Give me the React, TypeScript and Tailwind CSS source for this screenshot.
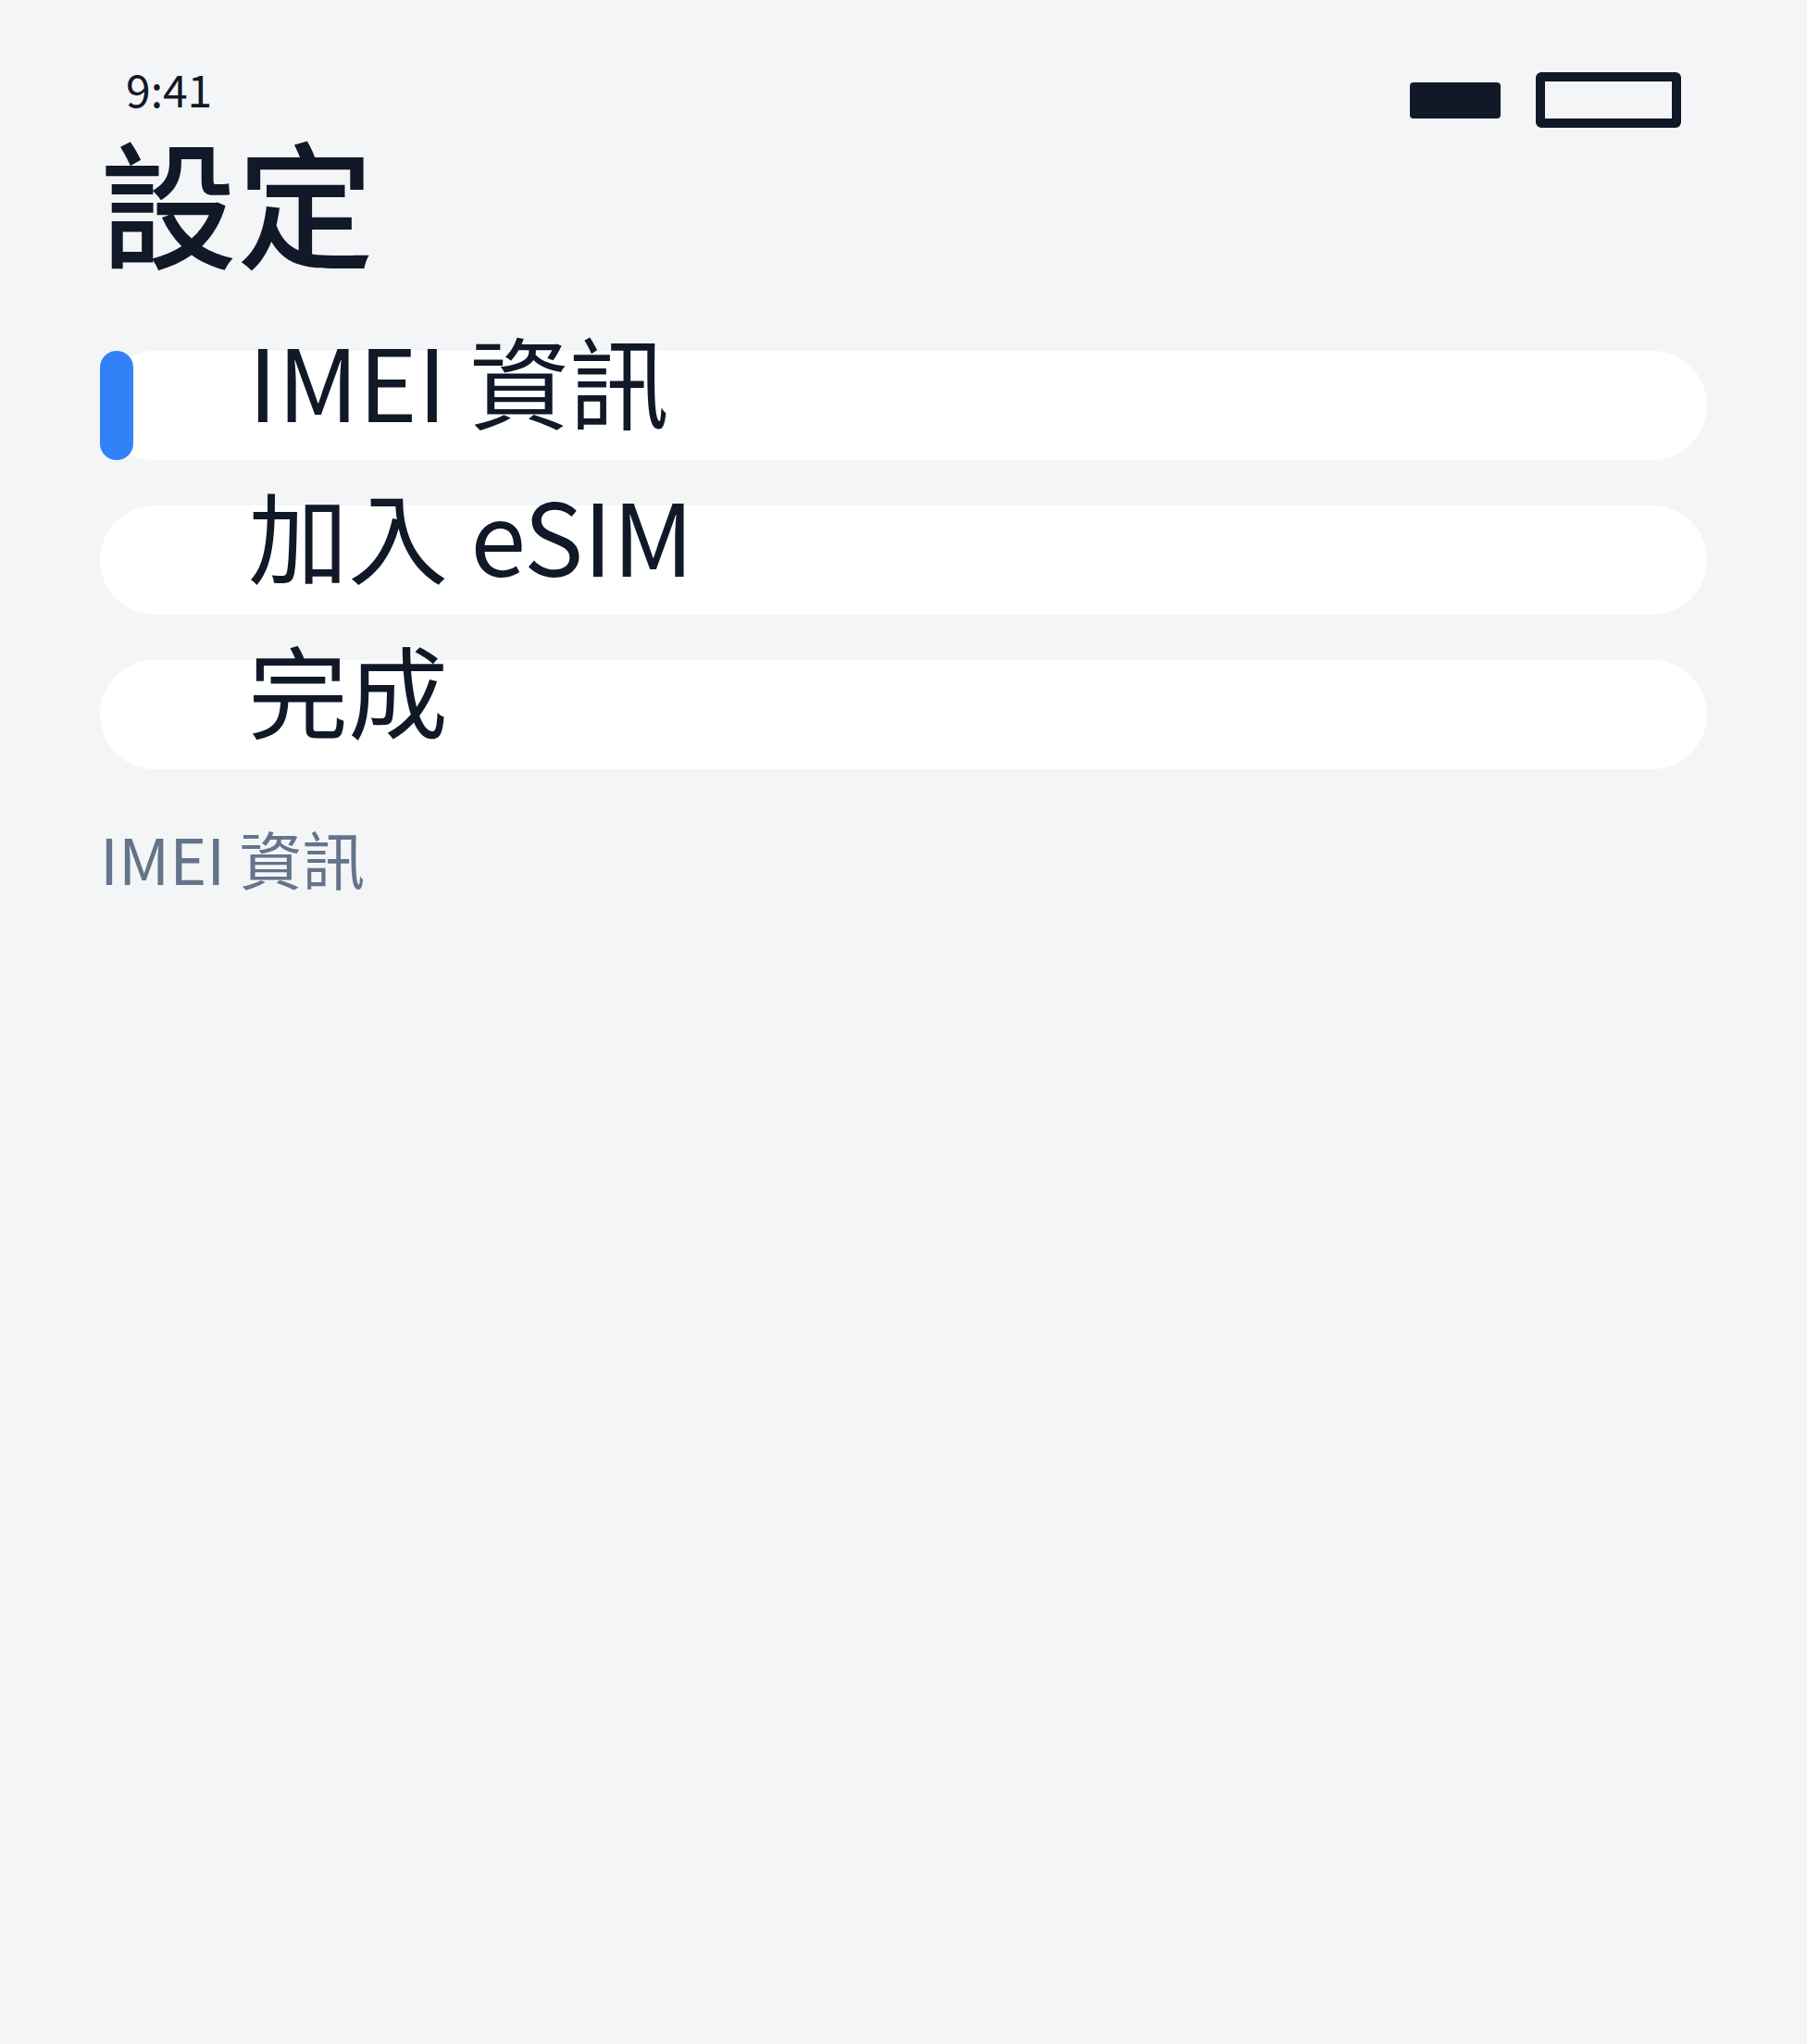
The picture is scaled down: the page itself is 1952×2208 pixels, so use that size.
import React from "react";

const FONT = { fontFamily: '"Noto Sans CJK TC", "Noto Sans", sans-serif' };

function Pill({ label, active }: { label: string; active?: boolean }) {
  return (
    <div className="relative flex items-start h-[118px] rounded-full bg-white pl-[160px]">
      {active && <div className="absolute left-0 top-0 bottom-0 w-9 rounded-full bg-[#3182f6]" />}
      <span className="text-[108px] leading-none -mt-[24px] text-[#111827] whitespace-nowrap">{label}</span>
    </div>
  );
}

export default function App() {
  return (
    <div className="w-full min-h-[2208px] bg-[#f4f5f7] px-[108px] pt-[78px]" style={FONT}>
      <div className="flex justify-between items-start h-[60px] px-7">
        <span className="text-[48px] leading-none -mt-[7px] text-[#111827]">9:41</span>
        <div className="flex items-center gap-[38px] h-full">
          <div className="w-[98px] h-[39px] rounded bg-[#111827]" />
          <div className="w-[157px] h-[60px] rounded-md border-[10px] border-[#111827]" />
        </div>
      </div>
      <h1 className="mt-[3px] text-[148px] leading-none font-medium text-[#111827]">設定</h1>
      <div className="mt-[90px] flex flex-col gap-[49px]">
        <Pill label="IMEI 資訊" active />
        <Pill label="加入 eSIM" />
        <Pill label="完成" />
      </div>
      <p className="mt-[62px] text-[68px] leading-none text-[#64748b]">IMEI 資訊</p>
    </div>
  );
}
